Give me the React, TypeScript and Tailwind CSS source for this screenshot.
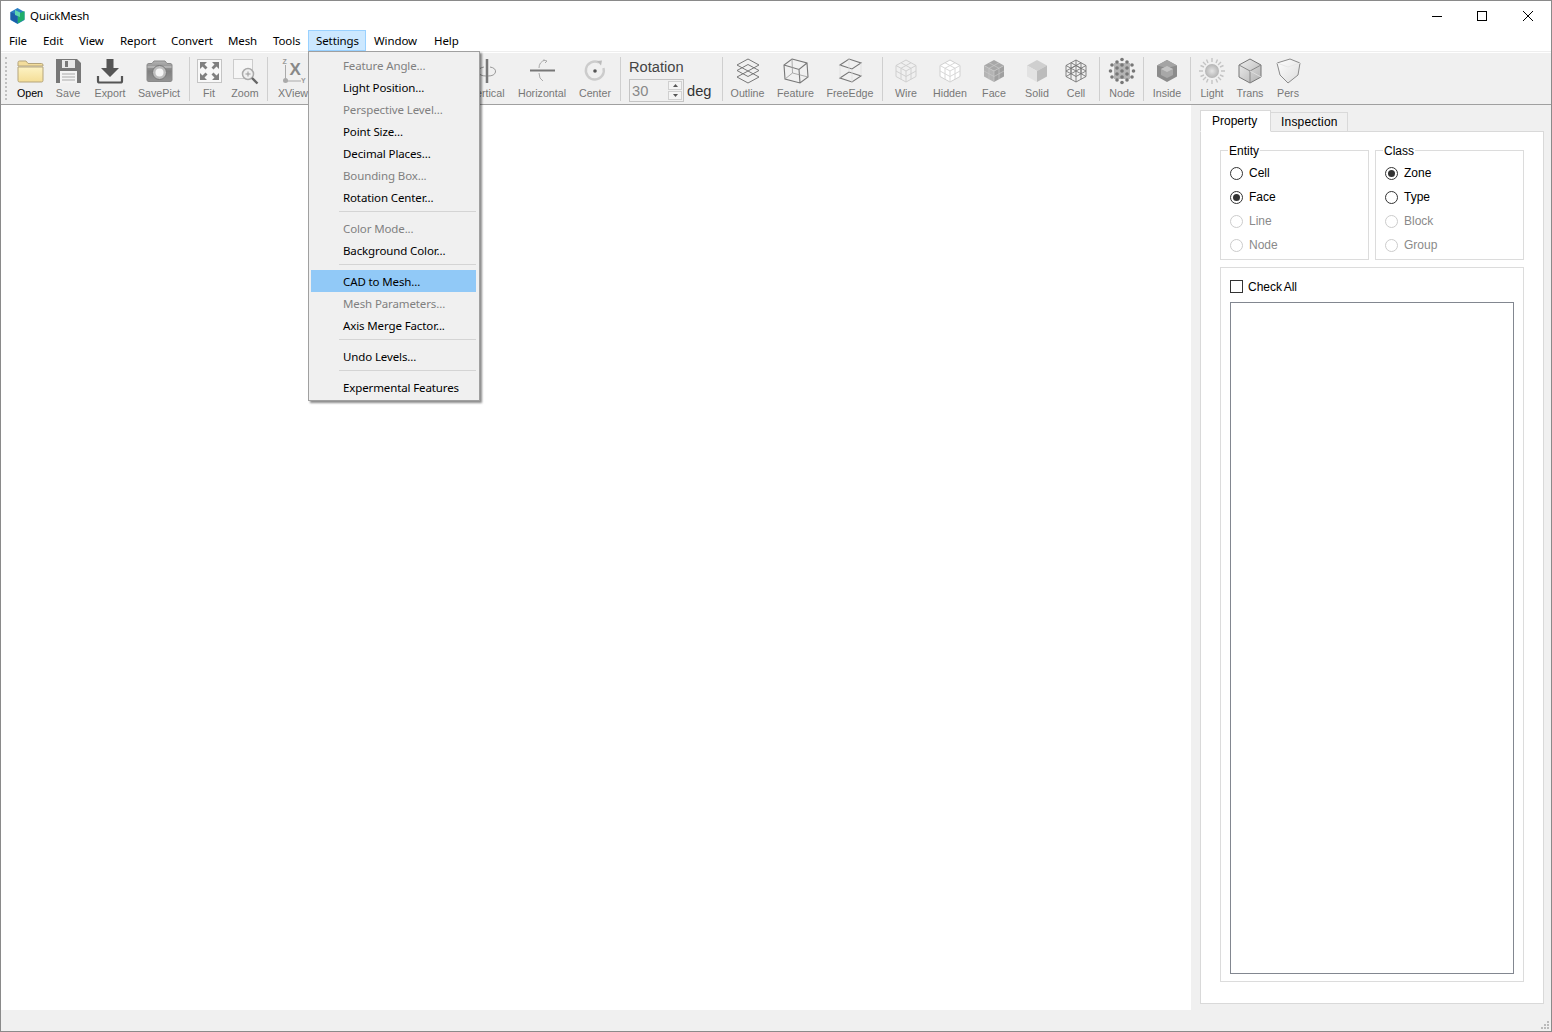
import type { ReactNode } from "react";

const ui = "font-['Noto_Sans','Open_Sans',sans-serif]";
const arial = "font-['Liberation_Sans',Arial,sans-serif]";

const HEX = "M14 3 24 8.5V19.5L14 25 4 19.5V8.5Z";
const Y_LINES = "M4 8.5 14 14 24 8.5M14 14V25";
const GRID = "M9 5.75 19 11.25M19 5.75 9 11.25M19 11.25V22.25M9 11.25V22.25M14 19.5 24 14M14 19.5 4 14";

function Icon({ children }: { children: ReactNode }) {
  return (
    <svg width="28" height="28" viewBox="0 0 28 28" fill="none">
      {children}
    </svg>
  );
}

const icons: Record<string, ReactNode> = {
  open: (
    <Icon>
      <path d="M2 9V5.5Q2 4 3.5 4H10L12 6.5H25.5Q27 6.5 27 8V9Z" fill="#f3dd9c" stroke="#b5a57c" />
      <path d="M2 10 H27 V23.5Q27 25 25.5 25H3.5Q2 25 2 23.5Z" fill="url(#folder)" stroke="#b5a57c" />
    </Icon>
  ),
  save: (
    <Icon>
      <path d="M2 2H23L27 6V26H2Z" fill="#777" />
      <rect x="8" y="3" width="13" height="8" fill="#e8e8e8" />
      <rect x="11" y="4" width="3" height="6" fill="#777" />
      <rect x="6" y="14" width="17" height="12" fill="#f4f4f4" />
      <path d="M8 17H21M8 20H21M8 23H21" stroke="#aaa" />
    </Icon>
  ),
  export: (
    <Icon>
      <path d="M10.5 2H17.5V11H23L14 20 5 11H10.5Z" fill="#555" />
      <path d="M2 19V24Q2 25.5 3.5 25.5H24.5Q26 25.5 26 24V19" stroke="#555" strokeWidth="2.2" />
    </Icon>
  ),
  camera: (
    <Icon>
      <path d="M2 8Q2 6.5 4 6.5H7L9 4H20L22 6.5H25Q27 6.5 27 8V23Q27 24.5 25 24.5H4Q2 24.5 2 23Z" fill="url(#cam)" stroke="#8a8a8a" />
      <path d="M2.5 10H26.5" stroke="#cfcfcf" />
      <circle cx="14.5" cy="15.5" r="7" fill="#bdbdbd" stroke="#777" />
      <circle cx="14.5" cy="15.5" r="4" fill="#f4f4f4" />
    </Icon>
  ),
  fit: (
    <Icon>
      <rect x="2.5" y="2.5" width="24" height="23" fill="#f8f8f8" stroke="#c4c4c4" />
      <path d="M5 5h7l-2.5 2.5 3 3-2 2-3-3L5 12ZM24 5v7l-2.5-2.5-3 3-2-2 3-3L17 5ZM5 23v-7l2.5 2.5 3-3 2 2-3 3L12 23ZM24 23h-7l2.5-2.5-3-3 2-2 3 3L24 16Z" fill="#808080" />
    </Icon>
  ),
  zoom: (
    <Icon>
      <rect x="2.5" y="2.5" width="19" height="19" fill="#f6f6f6" stroke="#ccc" />
      <circle cx="17" cy="17" r="5.5" fill="#f0f0f0" stroke="#aaa" strokeWidth="1.5" />
      <path d="M14.5 17H19.5M17 14.5V19.5" stroke="#999" />
      <path d="M21 21 26.5 26.5" stroke="#666" strokeWidth="2.4" />
    </Icon>
  ),
  xview: (
    <Icon>
      <path d="M6.5 8V24M6.5 24H22" stroke="#aaa" />
      <circle cx="6.5" cy="23.5" r="2.5" fill="#aaa" />
      <text x="3.5" y="7" fontSize="7" fontWeight="700" fill="#999" fontFamily="Liberation Sans">Z</text>
      <text x="22" y="26" fontSize="7" fontWeight="700" fill="#999" fontFamily="Liberation Sans">Y</text>
      <text x="10.5" y="18" fontSize="17" fontWeight="700" fill="#888" fontFamily="Liberation Sans">X</text>
    </Icon>
  ),
  vertical: (
    <Icon>
      <path d="M14 2V26" stroke="#777" strokeWidth="2.5" />
      <path d="M17 10Q23 11 22.5 15 21.5 19 15 19" stroke="#999" />
      <path d="M11 10Q5 11 5.5 15 6.5 19 13 19" stroke="#999" />
    </Icon>
  ),
  horizontal: (
    <Icon>
      <path d="M2 13.5H27" stroke="#777" strokeWidth="2" />
      <path d="M17 3Q11 5 11 11M11 16Q11 22 15 24" stroke="#aaa" />
      <path d="M15 3 19 4 17 6" stroke="#aaa" />
    </Icon>
  ),
  center: (
    <Icon>
      <path d="M18 5.5A9 9 0 1 0 22.5 11" stroke="#ccc" strokeWidth="2.4" />
      <path d="M16 4 21 3.5 20 8.5Z" fill="#bbb" />
      <circle cx="14" cy="14" r="1.8" fill="#555" />
    </Icon>
  ),
  outline: (
    <Icon>
      <g stroke="#777">
        <path d="M3 20 14 14 25 20 14 26Z" />
        <path d="M3 13.5 14 7.5 25 13.5 14 19.5Z" />
        <path d="M3 8 14 2 25 8 14 14Z" />
      </g>
    </Icon>
  ),
  feature: (
    <Icon>
      <path d="M10 2 25 6 26 20 18 26 3 22 2 8ZM2 8 17 12.5 25 6M17 12.5 18 26" stroke="#777" strokeWidth="1.1" />
      <path d="M10 2 10.5 16 3 22M10.5 16 26 20" stroke="#999" strokeWidth="0.8" />
    </Icon>
  ),
  freeedge: (
    <Icon>
      <path d="M4 8 13 2 25 6 16 12ZM4 21 13 15 25 19 16 25Z" stroke="#777" strokeWidth="1.1" />
      <path d="M4 8V21M25 6V19M13 2V15M16 12V25" stroke="#ddd" strokeWidth="0.7" />
    </Icon>
  ),
  wire: (
    <Icon>
      <g stroke="#d0d0d0">
        <path d={HEX} />
        <path d={Y_LINES} />
        <path d={GRID} />
      </g>
    </Icon>
  ),
  hidden: (
    <Icon>
      <path d={HEX} fill="#ffffff" stroke="#d0d0d0" />
      <g stroke="#d8d8d8">
        <path d={Y_LINES} />
        <path d={GRID} />
      </g>
    </Icon>
  ),
  face: (
    <Icon>
      <path d="M14 3 24 8.5 14 14 4 8.5Z" fill="#a8a8a8" />
      <path d="M4 8.5 14 14V25L4 19.5Z" fill="#b4b4b4" />
      <path d="M24 8.5 14 14V25L24 19.5Z" fill="#a0a0a0" />
      <g stroke="#c8c8c8" strokeWidth="0.7">
        <path d={Y_LINES} />
        <path d={GRID} />
      </g>
    </Icon>
  ),
  solid: (
    <Icon>
      <path d="M14 3 24 8.5 14 14 4 8.5Z" fill="#cfcfcf" />
      <path d="M4 8.5 14 14V25L4 19.5Z" fill="#e2e2e2" />
      <path d="M24 8.5 14 14V25L24 19.5Z" fill="#bcbcbc" />
    </Icon>
  ),
  cell: (
    <Icon>
      <g stroke="#777" strokeWidth="0.9">
        <path d={HEX} />
        <path d={Y_LINES} />
        <path d={GRID} />
        <path d="M4 14 14 8.5 24 14M4 19.5 14 14 24 19.5M14 3V14M9 5.75V16.75M19 5.75V16.75" />
      </g>
    </Icon>
  ),
  node: (
    <Icon>
      <path d="M6 6H22V22H6Z" fill="#b4b4b4" />
      <g fill="#777">
        {[
          [14, 2.5], [9, 5], [19, 5], [4, 8], [14, 8], [24, 8], [9, 11], [19, 11],
          [2.5, 14], [14, 14], [25.5, 14], [9, 17], [19, 17], [4, 20], [14, 20],
          [24, 20], [9, 23], [19, 23], [14, 25.5],
        ].map(([x, y]) => (
          <circle key={`${x}-${y}`} cx={x} cy={y} r="1.8" />
        ))}
      </g>
    </Icon>
  ),
  inside: (
    <Icon>
      <path d={HEX} fill="#8c8c8c" />
      <path d="M14 3 24 8.5 14 11 4 8.5Z" fill="#a4a4a4" />
      <path d="M14 9 20 12V18L14 21 8 18V12Z" fill="#a8a8a8" />
      <path d="M14 9 20 12 14 15 8 12Z" fill="#c4c4c4" />
    </Icon>
  ),
  light: (
    <Icon>
      <circle cx="14" cy="14" r="7" fill="url(#sun)" />
      <path d="M14 1V5M14 23V27M1 14H5M23 14H27M5 5 8 8M20 20 23 23M23 5 20 8M8 20 5 23M8.5 2.5 10 6M19.5 2.5 18 6M8.5 25.5 10 22M19.5 25.5 18 22M2.5 8.5 6 10M2.5 19.5 6 18M25.5 8.5 22 10M25.5 19.5 22 18" stroke="#c4c4c4" strokeWidth="1.4" />
    </Icon>
  ),
  trans: (
    <Icon>
      <path d="M14 2 25 8V20L14 26 3 20V8Z" fill="url(#trans)" stroke="#777" />
      <path d="M3 8 14 14 25 8M14 14V26" stroke="#888" />
      <path d="M14 14 25 20" stroke="#ddd" />
    </Icon>
  ),
  pers: (
    <Icon>
      <path d="M3 6 16 2 26 6 24 18 14 26 6 18Z" fill="url(#pers)" stroke="#8a8a8a" />
      <path d="M3 6 14 10 26 6" stroke="#e8e8e8" />
    </Icon>
  ),
};

const menus: [string, number][] = [
  ["File", 34], ["Edit", 36], ["View", 41], ["Report", 51], ["Convert", 57],
  ["Mesh", 45], ["Tools", 43], ["Settings", 58], ["Window", 60], ["Help", 40],
];

type MenuEntry = { t: string; off?: boolean; hot?: boolean } | "sep";
const settings: MenuEntry[] = [
  { t: "Feature Angle...", off: true },
  { t: "Light Position..." },
  { t: "Perspective Level...", off: true },
  { t: "Point Size..." },
  { t: "Decimal Places..." },
  { t: "Bounding Box...", off: true },
  { t: "Rotation Center..." },
  "sep",
  { t: "Color Mode...", off: true },
  { t: "Background Color..." },
  "sep",
  { t: "CAD to Mesh...", hot: true },
  { t: "Mesh Parameters...", off: true },
  { t: "Axis Merge Factor..." },
  "sep",
  { t: "Undo Levels..." },
  "sep",
  { t: "Expermental Features" },
];

function Tool({ label, icon, w, dark }: { label: string; icon: string; w: string; dark?: boolean }) {
  return (
    <div className={`flex flex-col items-center shrink-0 ${w}`}>
      <div className="w-[28px] h-[28px]">{icons[icon]}</div>
      <span className={`mt-px text-[10.7px] leading-[14px] whitespace-nowrap ${arial} ${dark ? "text-black" : "text-[#777777]"}`}>
        {label}
      </span>
    </div>
  );
}

function Sep({ w }: { w: string }) {
  return (
    <div className={`flex justify-center shrink-0 ${w}`}>
      <div className="w-px h-[44px] bg-[#cfcfcf]" />
    </div>
  );
}

function Radio({ label, on, off }: { label: string; on?: boolean; off?: boolean }) {
  return (
    <div className="flex items-center h-[24px]">
      <span className={`w-[13px] h-[13px] rounded-full border bg-white flex items-center justify-center ${off ? "border-[#cccccc]" : "border-[#333333]"}`}>
        {on && <span className="w-[7px] h-[7px] rounded-full bg-[#333333]" />}
      </span>
      <span className={`ml-[6px] text-[12px] ${off ? "text-[#8a8a8a]" : "text-black"}`}>{label}</span>
    </div>
  );
}

function Group({ title, items, w }: { title: string; items: { label: string; on?: boolean; off?: boolean }[]; w: string }) {
  return (
    <fieldset className={`border border-[#dcdcdc] h-[118px] px-[9px] pt-[3px] ${w}`}>
      <legend className="-ml-[2px] px-px pt-[2px] text-[12px] leading-[14px] text-black">{title}</legend>
      {items.map((r) => (
        <Radio key={r.label} {...r} />
      ))}
    </fieldset>
  );
}

export default function App() {
  return (
    <div className={`relative w-[1552px] h-[1032px] border border-[#8a8a8a] bg-white flex flex-col overflow-hidden ${ui}`}>
      <svg width="0" height="0" className="absolute">
        <defs>
          <linearGradient id="folder" x1="0" y1="0" x2="0" y2="1">
            <stop offset="0" stopColor="#fdf3c4" />
            <stop offset="1" stopColor="#f4dd96" />
          </linearGradient>
          <linearGradient id="cam" x1="0" y1="0" x2="0" y2="1">
            <stop offset="0" stopColor="#b4b4b4" />
            <stop offset="0.5" stopColor="#808080" />
            <stop offset="1" stopColor="#949494" />
          </linearGradient>
          <radialGradient id="sun">
            <stop offset="0" stopColor="#e4e4e4" />
            <stop offset="1" stopColor="#b4b4b4" />
          </radialGradient>
          <linearGradient id="trans" x1="0" y1="0" x2="1" y2="1">
            <stop offset="0" stopColor="#f0f0f0" />
            <stop offset="1" stopColor="#b0b0b0" />
          </linearGradient>
          <linearGradient id="pers" x1="0" y1="0" x2="1" y2="1">
            <stop offset="0" stopColor="#ffffff" />
            <stop offset="1" stopColor="#dcdcdc" />
          </linearGradient>
        </defs>
      </svg>

      {/* title bar */}
      <div className="h-[29px] shrink-0 flex items-center">
        <svg className="ml-[9px]" width="15" height="16" viewBox="0 0 15 16">
          <path d="M7.5 0 14.5 4V12L7.5 16 .5 12V4Z" fill="#2a7fc4" />
          <path d="M7.5 6 14.5 3V11.5L7.5 15.5Z" fill="#1fae6a" />
          <path d="M.5 4 7.5 7V15.5L.5 11.5Z" fill="#1b5ea8" />
          <path d="M5 2 10 4.5V9L5 7Z" fill="#5fd6b0" />
        </svg>
        <span className="ml-[5px] text-[11.5px] tracking-[-0.1px] text-black">QuickMesh</span>
        <div className="ml-auto flex">
          <div className="w-[46px] h-[29px] flex items-center justify-center">
            <svg width="10" height="10"><path d="M0 5.5H10" stroke="#000" /></svg>
          </div>
          <div className="w-[44px] h-[29px] flex items-center justify-center">
            <svg width="10" height="10"><rect x=".5" y=".5" width="9" height="9" fill="none" stroke="#000" /></svg>
          </div>
          <div className="w-[47px] h-[29px] flex items-center justify-center">
            <svg width="10" height="10"><path d="M0 0 10 10M10 0 0 10" stroke="#000" /></svg>
          </div>
        </div>
      </div>

      {/* menu bar */}
      <div className="h-[22px] shrink-0 flex border-b border-[#eeeeee] text-[11.5px] tracking-[-0.1px] text-black">
        {menus.map(([name, w]) => (
          <div
            key={name}
            style={{ width: w }}
            className={`h-[21px] pl-[7px] pt-px flex items-center border ${name === "Settings" ? "bg-[#cce8ff] border-[#99d1ff]" : "border-transparent"}`}
          >
            {name}
          </div>
        ))}
      </div>

      {/* toolbar */}
      <div className="h-[53px] shrink-0 flex bg-[#f0f0f0] border-t border-t-white border-b border-b-[#a0a0a0] pt-[4px]">
        <div className="w-[10px] shrink-0 pl-[4px]">
          <div className="h-[43px] w-0 border-l-2 border-dotted border-[#c0c0c0]" />
        </div>
        <Tool label="Open" icon="open" w="w-[38px]" dark />
        <Tool label="Save" icon="save" w="w-[38px]" />
        <Tool label="Export" icon="export" w="w-[46px]" />
        <Tool label="SavePict" icon="camera" w="w-[52px]" />
        <Sep w="w-[8px]" />
        <Tool label="Fit" icon="fit" w="w-[32px]" />
        <Tool label="Zoom" icon="zoom" w="w-[40px]" />
        <Sep w="w-[5px]" />
        <Tool label="XView" icon="xview" w="w-[46px]" />
        {/* the rest of this group sits behind the open menu */}
        <div className="w-[146px] shrink-0" />
        <Tool label="Vertical" icon="vertical" w="w-[50px]" />
        <Tool label="Horizontal" icon="horizontal" w="w-[60px]" />
        <Tool label="Center" icon="center" w="w-[46px]" />
        <Sep w="w-[5px]" />
        <div className={`w-[96px] shrink-0 pl-[6px] text-[14.67px] text-[#444444] ${arial}`}>
          <div className="leading-[20px]">Rotation</div>
          <div className="flex items-center mt-[2px]">
            <div className="w-[55px] h-[23px] border border-[#c4c4c4] flex items-center justify-between pl-[2px] pr-px text-[#888888]">
              <span>30</span>
              <div className="w-[14px] h-[19px] flex flex-col gap-px">
                <div className="flex-1 border border-[#d0d0d0] bg-[#f4f4f4] flex items-center justify-center">
                  <svg width="5" height="3"><path d="M0 3 2.5 0 5 3Z" fill="#555" /></svg>
                </div>
                <div className="flex-1 border border-[#d0d0d0] bg-[#f4f4f4] flex items-center justify-center">
                  <svg width="5" height="3"><path d="M0 0 2.5 3 5 0Z" fill="#555" /></svg>
                </div>
              </div>
            </div>
            <span className="ml-[3px] text-[#333333]">deg</span>
          </div>
        </div>
        <Sep w="w-[6px]" />
        <Tool label="Outline" icon="outline" w="w-[45px]" />
        <Tool label="Feature" icon="feature" w="w-[51px]" />
        <Tool label="FreeEdge" icon="freeedge" w="w-[58px]" />
        <Sep w="w-[7px]" />
        <Tool label="Wire" icon="wire" w="w-[40px]" />
        <Tool label="Hidden" icon="hidden" w="w-[48px]" />
        <Tool label="Face" icon="face" w="w-[40px]" />
        <Tool label="Solid" icon="solid" w="w-[46px]" />
        <Tool label="Cell" icon="cell" w="w-[32px]" />
        <Sep w="w-[14px]" />
        <Tool label="Node" icon="node" w="w-[32px]" />
        <Sep w="w-[10px]" />
        <Tool label="Inside" icon="inside" w="w-[38px]" />
        <Sep w="w-[8px]" />
        <Tool label="Light" icon="light" w="w-[36px]" />
        <Tool label="Trans" icon="trans" w="w-[40px]" />
        <Tool label="Pers" icon="pers" w="w-[36px]" />
      </div>

      {/* canvas and dock */}
      <div className="flex-1 flex min-h-0">
        <div className="flex-1 bg-white" />
        <div className={`w-[360px] shrink-0 bg-[#f0f0f0] pl-[9px] pr-[7px] pt-[5px] pb-[6px] flex flex-col ${arial}`}>
          <div className="flex items-end h-[21px] text-[12px] text-black relative z-10">
            <div className="w-[71px] h-[22px] -mb-px bg-white border border-[#d9d9d9] border-b-white pl-[11px] pt-px">Property</div>
            <div className="w-[77px] h-[19px] bg-[#f0f0f0] border border-l-0 border-[#d9d9d9] border-b-0 pl-[10px] tracking-[0.2px]">Inspection</div>
          </div>
          <div className="flex-1 bg-white border border-[#d9d9d9] pl-[19px] pt-[10px]">
            <div className="flex gap-[6px]">
              <Group
                title="Entity"
                w="w-[149px]"
                items={[{ label: "Cell" }, { label: "Face", on: true }, { label: "Line", off: true }, { label: "Node", off: true }]}
              />
              <Group
                title="Class"
                w="w-[149px]"
                items={[{ label: "Zone", on: true }, { label: "Type" }, { label: "Block", off: true }, { label: "Group", off: true }]}
              />
            </div>
            <div className="mt-[7px] w-[304px] h-[715px] border border-[#dcdcdc] px-[9px] pt-[12px]">
              <div className="flex items-center h-[13px]">
                <span className="w-[13px] h-[13px] border border-[#333333] bg-white" />
                <span className="ml-[5px] text-[12px] text-black [word-spacing:-1px]">Check All</span>
              </div>
              <div className="mt-[9px] w-[284px] h-[672px] border border-[#828790] bg-white" />
            </div>
          </div>
        </div>
      </div>

      {/* status bar */}
      <div className="h-[21px] shrink-0 bg-[#f0f0f0] flex items-end justify-end">
        <svg width="10" height="10" className="mr-px mb-px">
          <path d="M7 1h2v2H7ZM4 4h2v2H4ZM7 4h2v2H7ZM1 7h2v2H1ZM4 7h2v2H4ZM7 7h2v2H7Z" fill="#bbbbbb" />
        </svg>
      </div>

      {/* open Settings menu */}
      <div className="absolute left-[307px] top-[50px] w-[172px] bg-[#f0f0f0] border border-[#a0a0a0] pl-[2px] pr-[3px] py-[2px] text-[11.5px] tracking-[-0.12px] shadow-[2px_2px_2px_rgba(0,0,0,0.45)]">
        {settings.map((m, i) =>
          m === "sep" ? (
            <div key={i} className="h-[9px] pt-[3px] pl-[28px]">
              <div className="h-px bg-[#d4d4d4]" />
            </div>
          ) : (
            <div
              key={m.t}
              className={`h-[22px] pl-[32px] pt-px flex items-center whitespace-nowrap ${m.hot ? "bg-[#91c9f7]" : ""} ${m.off ? "text-[#808080]" : "text-black"}`}
            >
              {m.t}
            </div>
          )
        )}
      </div>
    </div>
  );
}
